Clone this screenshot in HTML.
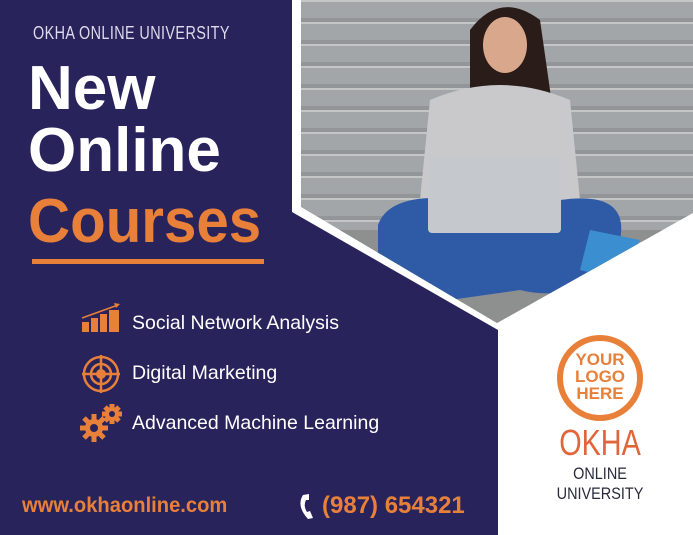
<!DOCTYPE html>
<html><head><meta charset="utf-8"><style>
*{margin:0;padding:0}
body{width:693px;height:535px;overflow:hidden;background:#29235c;position:relative;font-family:"Liberation Sans",sans-serif}
.a{position:absolute;white-space:nowrap}
</style></head><body>
<svg class="a" style="left:0;top:0" width="693" height="535">
<defs>
<pattern id="st" width="693" height="22" patternUnits="userSpaceOnUse">
<rect width="693" height="22" fill="#a3a6a8"/><rect y="0" width="693" height="2" fill="#c4c6c6"/><rect y="18" width="693" height="4" fill="#939699"/>
</pattern>
<clipPath id="ph"><polygon points="301,0 693,0 693,213 497,323 301,207"/></clipPath>
</defs>
<polygon points="292,0 693,0 693,535 498,535 498,330 292,212" fill="#fff"/>
<g clip-path="url(#ph)">
<rect x="290" y="0" width="410" height="330" fill="url(#st)"/>
<rect x="290" y="230" width="410" height="100" fill="#8e8f8f"/>
<path d="M470 30 Q500 -10 540 20 L560 160 L470 170Z" fill="#2a1c18"/>
<ellipse cx="505" cy="45" rx="22" ry="28" fill="#d9a88c"/>
<path d="M430 100 Q500 70 570 100 L580 200 L420 200Z" fill="#c9c9cc"/>
<path d="M378 225 Q390 190 470 200 L560 200 Q630 190 620 240 L600 280 Q560 300 520 290 L450 300 Q390 290 378 260Z" fill="#2f5ba6"/>
<rect x="428" y="157" width="133" height="76" rx="4" fill="#c5c9cd"/>
<path d="M590 230 L640 240 L620 280 L580 270Z" fill="#3b8fd0"/>
</g>
<polygon points="32,259 264,259 264,264 32,264" fill="#e8803a"/>
<g fill="#e8803a"><rect x="82" y="322" width="7" height="10"/><rect x="91" y="318" width="7" height="14"/><rect x="100" y="314" width="7" height="18"/><rect x="109" y="310" width="10" height="22"/>
<path d="M82 318 L118 305" stroke="#e8803a" stroke-width="1.5"/><path d="M120 304 l-6 -1 l2 5z"/></g>
<g fill="none" stroke="#e8803a" stroke-width="2.5"><circle cx="101" cy="374" r="17"/><circle cx="101" cy="374" r="10"/><path d="M101 355v38M82 374h38"/></g>
<circle cx="101" cy="374" r="5" fill="#e8803a"/>
<g fill="#e8803a"><circle cx="94" cy="428" r="9"/><circle cx="112" cy="414" r="7"/></g>
<g stroke="#e8803a" stroke-width="5"><path d="M94 414v28M80 428h28M84 418l20 20M104 418l-20 20"/><path d="M112 404v20M102 414h20M105 407l14 14M119 407l-14 14"/></g>
<circle cx="94" cy="428" r="4" fill="#29235c"/><circle cx="112" cy="414" r="3" fill="#29235c"/>
<path d="M303 495 q-7 11 5 24 l5 -1 l-3 -7 l-3 1 q-4 -6 -1 -12 l3 0 l0 -6z" fill="#fff"/>
<circle cx="600" cy="378" r="40" fill="none" stroke="#e8803a" stroke-width="6"/>
</svg>
<div class="a" style="left:33px;top:23px;font-size:18px;color:#dcdcec;letter-spacing:0.5px;transform:scaleX(.8);transform-origin:left">OKHA ONLINE UNIVERSITY</div>
<div class="a" style="left:28px;top:58px;font-size:62px;font-weight:bold;color:#fff;line-height:62px">New<br>Online</div>
<div class="a" style="left:28px;top:186px;font-size:62px;font-weight:bold;color:#e8803a;line-height:72px;transform:scaleX(.94);transform-origin:left">Courses</div>
<div class="a" style="left:132px;top:312px;font-size:19.5px;color:#fff">Social Network Analysis</div>
<div class="a" style="left:132px;top:362px;font-size:19.5px;color:#fff">Digital Marketing</div>
<div class="a" style="left:132px;top:412px;font-size:19.5px;color:#fff">Advanced Machine Learning</div>
<div class="a" style="left:22px;top:494px;font-size:21px;font-weight:bold;color:#e8803a;transform:scaleX(.96);transform-origin:left">www.okhaonline.com</div>
<div class="a" style="left:322px;top:492px;font-size:24px;font-weight:bold;color:#e8803a">(987) 654321</div>
<div class="a" style="left:560px;top:351px;width:80px;text-align:center;font-size:17px;font-weight:900;color:#e8803a;line-height:17px">YOUR<br>LOGO<br>HERE</div>
<div class="a" style="left:540px;top:422px;width:120px;text-align:center;font-size:36px;color:#e0663a;transform:scaleX(.8)">OKHA</div>
<div class="a" style="left:540px;top:464px;width:120px;text-align:center;font-size:17px;color:#2a2a3a;line-height:20px;transform:scaleX(.85)">ONLINE<br>UNIVERSITY</div>
</body></html>
